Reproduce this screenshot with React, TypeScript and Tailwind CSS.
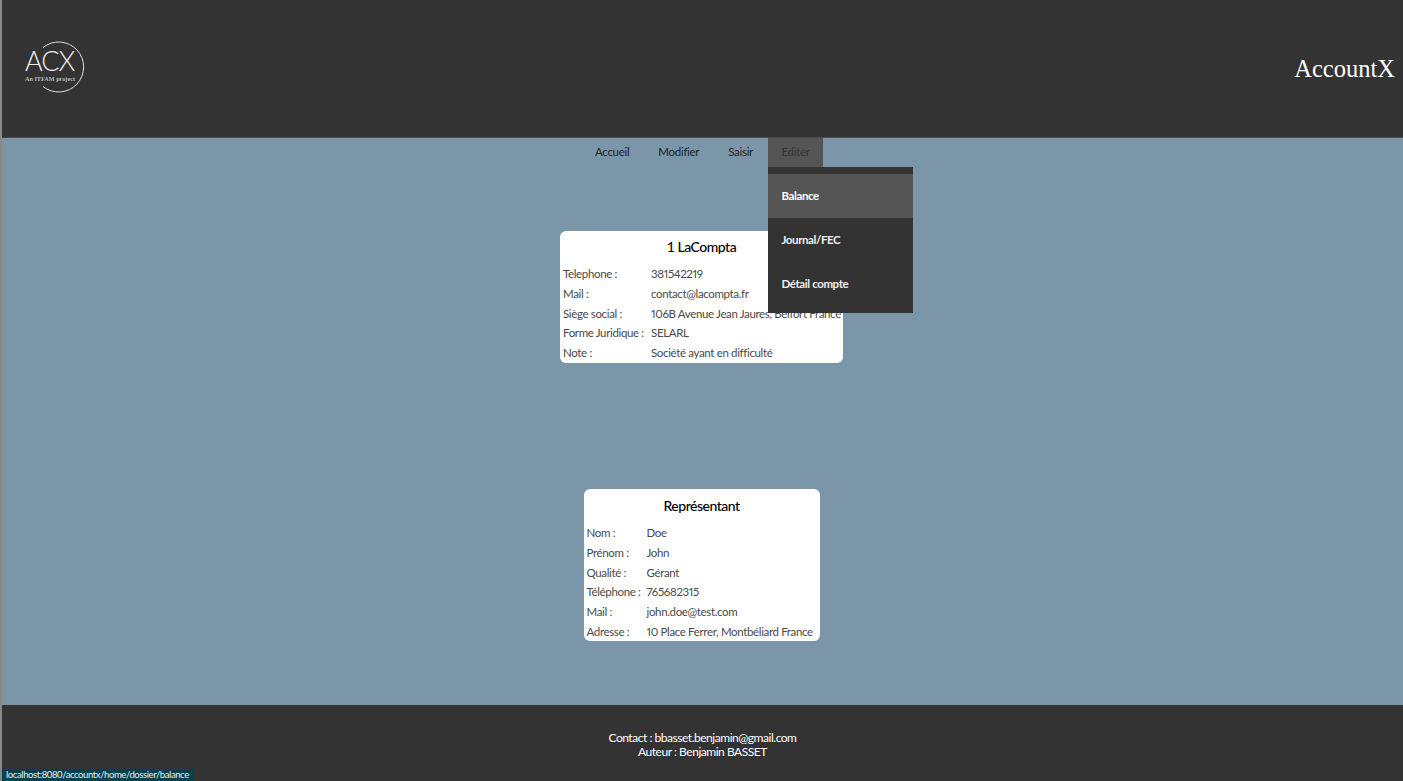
const font = { fontFamily: 'Lato, sans-serif' };

const societe = [
  ['Telephone :', '381542219'],
  ['Mail :', 'contact@lacompta.fr'],
  ['Siège social :', '106B Avenue Jean Jaures, Belfort France'],
  ['Forme Juridique :', 'SELARL'],
  ['Note :', 'Société ayant en difficulté'],
];

const representant = [
  ['Nom :', 'Doe'],
  ['Prénom :', 'John'],
  ['Qualité :', 'Gérant'],
  ['Téléphone :', '765682315'],
  ['Mail :', 'john.doe@test.com'],
  ['Adresse :', '10 Place Ferrer, Montbéliard France'],
];

function Logo() {
  return (
    <div className="relative -mt-[3px] h-[52px] w-[62px]">
      <svg className="overflow-visible" width="62" height="52" viewBox="0 0 62 52" fill="none" stroke="#dddddd" strokeWidth="1">
        <path d="M19 6.5 A25 25 0 1 1 19 45.5" />
      </svg>
      <span className="absolute left-[1px] top-[8px] text-[27px] font-light leading-[24px] tracking-[-1px] text-[#eeeeee]">ACX</span>
      <span className="absolute left-[1px] top-[33px] whitespace-nowrap font-['Liberation_Serif',serif] text-[6.2px] font-bold leading-[10px] text-[#bbbbbb]">An ITFAM project</span>
    </div>
  );
}

function InfoCard({ title, rows, box, labelWidth }: { title: string; rows: string[][]; box: string; labelWidth: string }) {
  return (
    <div className={`${box} mr-[2px] rounded-md bg-white`}>
      <h2 className="mb-[7px] text-center text-[14px] font-medium leading-[20px] tracking-[-0.5px] text-black">{title}</h2>
      {rows.map(([label, value]) => (
        <div key={label} className="flex h-[19.7px] items-center whitespace-nowrap px-[3px] text-[11.5px] tracking-[-0.35px] text-[#4a4a4a] [font-variant-numeric:proportional-nums]">
          <span className={`${labelWidth} shrink-0`}>{label}</span>
          <span>{value}</span>
        </div>
      ))}
    </div>
  );
}

export default function App() {
  return (
    <div className="relative flex h-[781px] w-[1403px] flex-col overflow-hidden border-l-2 border-[#8a8a8a] bg-[#7b96a9]" style={font}>
      {/* En-tête */}
      <header className="flex h-[138px] items-center justify-between border-b border-[#4a4a4a] bg-[#333333] pl-[22px] pr-[8px]">
        <Logo />
        <h1 className="mt-[2px] font-['Liberation_Serif',serif] text-[24.5px] text-white">AccountX</h1>
      </header>

      <main className="flex flex-1 flex-col items-center">
        <nav className="mr-[2px] flex h-[29px] items-stretch text-[11.5px] tracking-[-0.3px] text-[#222222]">
          <a className="flex items-center px-[14.5px] pb-[2px]">Accueil</a>
          <a className="flex items-center px-[14.5px] pb-[2px]">Modifier</a>
          <a className="flex items-center px-[14.5px] pb-[2px]">Saisir</a>
          <div className="relative">
            <a className="flex h-full w-[55px] items-center bg-[#555555] pb-[2px] pl-[14px] text-[#333333]">Editer</a>
            <div className="absolute left-0 top-[29px] z-10 w-[145px] bg-[#333333] py-[7px] text-[11.5px] font-bold tracking-[-0.4px] text-[#eeeeee]">
              <div className="flex h-[44px] items-center bg-[#555555] pl-[14px] text-white">Balance</div>
              <div className="flex h-[44px] items-center pl-[14px]">Journal/FEC</div>
              <div className="flex h-[44px] items-center pl-[14px]">Détail compte</div>
            </div>
          </div>
        </nav>

        <div className="mt-[64px]">
          <InfoCard title="1 LaCompta" rows={societe} box="w-[283px] pb-[1px] pt-[6px]" labelWidth="w-[88px]" />
        </div>
        <div className="mt-[125.5px]">
          <InfoCard title="Représentant" rows={representant} box="w-[236px] pt-[7px]" labelWidth="w-[60px]" />
        </div>
      </main>

      {/* Pied de page */}
      <footer className="flex h-[76px] flex-col items-center bg-[#333333] pt-[26px] text-[12px] leading-[14px] tracking-[-0.47px] text-white">
        <p>Contact : bbasset.benjamin@gmail.com</p>
        <p>Auteur : Benjamin BASSET</p>
      </footer>

      <div className="absolute bottom-0 left-0 flex h-[12px] w-[191px] items-center bg-[#00424f] pl-[4px] text-[9.5px] tracking-[-0.4px] text-[#eeeeee]">
        localhost:8080/accountx/home/dossier/balance
      </div>
    </div>
  );
}
